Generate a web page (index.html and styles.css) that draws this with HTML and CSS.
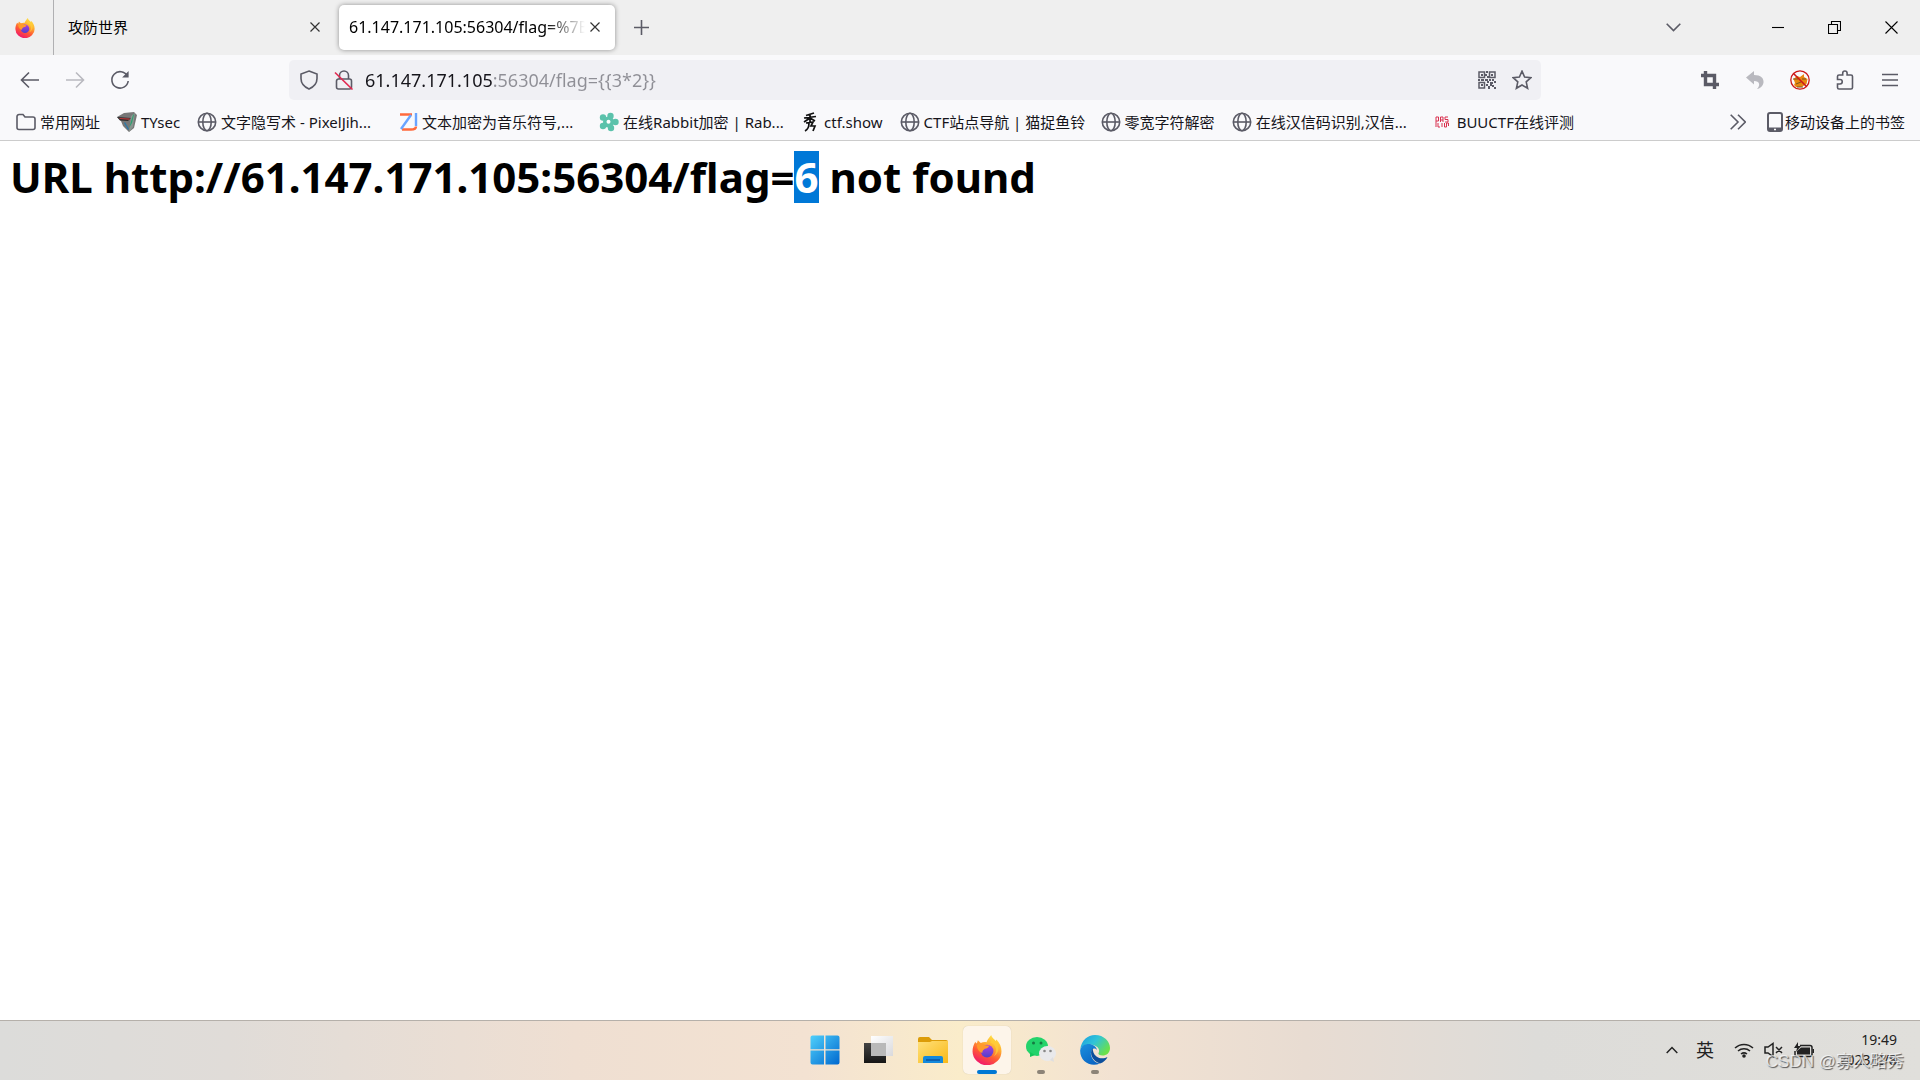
FILE: index.html
```html
<!DOCTYPE html>
<html lang="zh-CN">
<head>
<meta charset="utf-8">
<title>61.147.171.105:56304/flag={{3*2}}</title>
<link rel="stylesheet" href="styles.css">
</head>
<body>
<svg class="defs" aria-hidden="true">
  <defs>
    <linearGradient id="fx-body" x1="0.8" y1="0" x2="0.3" y2="1"><stop offset="0" stop-color="#ffe94a"/><stop offset=".35" stop-color="#ffb030"/><stop offset=".65" stop-color="#ff5a35"/><stop offset="1" stop-color="#f0136f"/></linearGradient>
    <linearGradient id="fx-core" x1="0" y1="0" x2="0" y2="1"><stop offset="0" stop-color="#b040e0"/><stop offset="1" stop-color="#5040c8"/></linearGradient>
    <linearGradient id="win" x1="0" y1="0" x2="1" y2="1"><stop offset="0" stop-color="#4fd0fb"/><stop offset="1" stop-color="#0068cf"/></linearGradient>
    <linearGradient id="dark" x1="0" y1="0" x2="0" y2="1"><stop offset="0" stop-color="#444"/><stop offset="1" stop-color="#161616"/></linearGradient>
    <linearGradient id="light" x1="0" y1="0" x2="1" y2="1"><stop offset="0" stop-color="#fff"/><stop offset="1" stop-color="#d9d9dc"/></linearGradient>
    <linearGradient id="folder" x1="0" y1="0" x2="1" y2="1"><stop offset="0" stop-color="#ffe07a"/><stop offset="1" stop-color="#f9b916"/></linearGradient>
    <linearGradient id="edge-top" x1="0" y1="0" x2="1" y2="0.6"><stop offset="0" stop-color="#1a9be0"/><stop offset=".5" stop-color="#30c4d8"/><stop offset="1" stop-color="#6be04a"/></linearGradient>
    <linearGradient id="edge-low" x1="0" y1="0" x2="0.6" y2="1"><stop offset="0" stop-color="#1b90de"/><stop offset="1" stop-color="#0a66c4"/></linearGradient>
    <symbol id="firefox" viewBox="0 0 28 28">
      <path d="M3 6.500 4.500 8 5.500 5l2.700 2.400c1.600-.9 3.900-1 5.300-.7C14.500 4 17 1 18 0c.2 2.700 3 3.600 4 5.500l.8-1.200C26 7.500 27.500 11.500 27.500 15A13.500 13 0 0 1 .5 15.500C.5 12 1.600 8.500 3 6.500z" fill="url(#fx-body)"/>
      <circle cx="14" cy="15" r="6" fill="url(#fx-core)"/>
      <path d="M4.500 9c3-1.500 6-1 7.500.5l4 .5c-.5 2-2.500 2.500-4 2.800-1 .8-2.500 1.700-2.300 3.700C6 16 4.500 12 4.500 9z" fill="#ff9a2a"/>
      <path d="M17 7c6 1.500 7 9 3 13 3.500-1.500 6-6 4-12-1-2-4-3-5-5z" fill="#ffce38" opacity=".75"/>
    </symbol>
    <symbol id="globe" viewBox="0 0 20 20"><g fill="none" stroke="#5b5b66" stroke-width="1.600"><circle cx="10" cy="10" r="8.700"/><ellipse cx="10" cy="10" rx="4.200" ry="8.700"/><path d="M1.500 10h17"/></g></symbol>
  </defs>
</svg>

<header class="browser">
  <div class="tabstrip">
    <button class="view-button" aria-label="Firefox View"><svg width="20" height="20"><use href="#firefox"/></svg></button>
    <div class="tab"><span class="tab-title">攻防世界</span><button class="tab-close" aria-label="关闭标签页"><svg width="10" height="10" viewBox="0 0 10 10"><path d="M.5.5l9 9M9.500.5l-9 9"/></svg></button></div>
    <div class="tab tab-active"><span class="tab-title">61.147.171.105:56304/flag=%7B%7B3*2</span><button class="tab-close" aria-label="关闭标签页"><svg width="10" height="10" viewBox="0 0 10 10"><path d="M.5.5l9 9M9.500.5l-9 9"/></svg></button></div>
    <button class="new-tab" aria-label="新建标签页"><svg width="15" height="15" viewBox="0 0 15 15"><path d="M7.500 0v15M0 7.500h15"/></svg></button>
    <button class="list-tabs" aria-label="列出标签页"><svg width="15" height="9" viewBox="0 0 15 9"><path d="M.7.7l6.800 6.800L14.300.7"/></svg></button>
    <div class="window-controls">
      <button aria-label="最小化"><svg width="12" height="12" viewBox="0 0 12 12"><path d="M0 5.500h12"/></svg></button>
      <button aria-label="还原"><svg width="13" height="13" viewBox="0 0 13 13"><path d="M.5 3.500h9v9h-9zM3.500 3.500v-3h9v9h-3"/></svg></button>
      <button aria-label="关闭"><svg width="13" height="13" viewBox="0 0 13 13"><path d="M.5.5l12 12M12.500.5l-12 12"/></svg></button>
    </div>
  </div>

  <div class="navbar">
    <div class="nav-left">
      <button aria-label="后退"><svg width="20" height="20" viewBox="0 0 20 20"><path d="M19 10H2M9 2.500L1.500 10 9 17.500"/></svg></button>
      <button class="faded" aria-label="前进"><svg width="20" height="20" viewBox="0 0 20 20"><path d="M1 10h17M11 2.500l7.500 7.500-7.500 7.500"/></svg></button>
      <button aria-label="刷新"><svg width="20" height="20" viewBox="0 0 20 20"><path d="M17.300 6A8.200 8.200 0 1 0 18.200 11"/><path d="M18.600 1v6.500h-6.500z" fill="#5b5b66" stroke="none"/></svg></button>
    </div>
    <div class="urlbar">
      <svg width="20" height="20" viewBox="0 0 20 20"><path d="M10 1l8 3v4.500c0 5-3.500 8.500-8 10.500-4.500-2-8-5.500-8-10.500V4z"/></svg>
      <svg width="20" height="20" viewBox="0 0 20 20"><path d="M5.500 9V5.500a4.500 4.500 0 0 1 9 0V9M4.500 9h11a2 2 0 0 1 2 2v6a2 2 0 0 1-2 2h-11a2 2 0 0 1-2-2v-6a2 2 0 0 1 2-2z"/><path d="M1 2.500l17.500 17" stroke="#e22850"/></svg>
      <input class="url-input" type="text" aria-label="网址" value="61.147.171.105:56304/flag={{3*2}}">
      <svg width="20" height="20" viewBox="0 0 20 20"><path d="M2 2h5.500v5.500H2zM12.500 2H18v5.500h-5.500zM2 12.500h5.500V18H2z" stroke-width="1.500"/><path d="M4 4h2v2H4zM14 4h2v2h-2zM4 14h2v2H4zM9 1h2v2H9zM8 4h2v2H8zM10 6h2v2h-2zM1 9h2v2H1zM4 9h3v2H4zM8 9h3v2H8zM12 9h2v2h-2zM15 9h2v2h-2zM17 11h2v2h-2zM10 11h2v2h-2zM13 12h3v2h-3zM9 14h2v2H9zM11 16h2v3h-2zM15 15h2v2h-2zM17 17h2v2h-2zM13 14h2v2h-2z" fill="#5b5b66" stroke="none"/></svg>
      <svg width="20" height="20" viewBox="0 0 20 20"><path d="M10 1.200l2.600 5.800 6.300.7-4.700 4.200 1.400 6.400-5.600-3.300-5.600 3.300 1.400-6.400L1.100 7.700 7.400 7z"/></svg>
    </div>
    <div class="nav-right">
      <button aria-label="截图"><svg width="18" height="18" viewBox="0 0 18 18"><path d="M4.500 0v13.500H18M0 4.500h13.500V18" stroke-width="3.400"/></svg></button>
      <button class="faded" aria-label="撤销"><svg width="18" height="18" viewBox="0 0 18 18"><path d="M0 6.500L8 0v4c7 0 10 3.500 9.500 7.500-.3 3-3 6-6.500 6.500 3.500-3.500 3-8-3-8v3.500z" fill="#5b5b66" stroke="none"/></svg></button>
      <button aria-label="FoxyProxy"><svg width="20" height="20" viewBox="0 0 20 20"><path d="M3.500 9L7 6l3 1 4-3v3l3.500 2-1 5-5 3H6l-2-2 1-2z" fill="#e88710" stroke="none"/><path d="M3 9h5M6 14l5-2M12 9h4M7 17h6" stroke="#7a5520" stroke-width="1"/><circle cx="10" cy="10" r="9.200" stroke="#cc1717" stroke-width="1.300"/><path d="M3.500 3.500l13 13" stroke="#cc1717"/></svg></button>
      <button aria-label="扩展"><svg width="20" height="20" viewBox="0 0 20 20"><path d="M2.500 8V6.500A1.500 1.500 0 0 1 4 5h3.700V3.200a2.200 2.200 0 0 1 4.400 0V5H16a1.500 1.500 0 0 1 1.500 1.500V17.500a1.500 1.500 0 0 1-1.500 1.500H4a1.500 1.500 0 0 1-1.500-1.500v-3.500H5a2 2 0 0 0 0-4.500H2.500z"/></svg></button>
      <button aria-label="菜单"><svg width="16" height="14" viewBox="0 0 16 14"><path d="M0 1.500h16M0 7h16M0 12.500h16"/></svg></button>
    </div>
  </div>

  <nav class="bookmarks">
    <a href="#"><svg width="20" height="20" viewBox="0 0 20 20"><path d="M1 4.500a2 2 0 0 1 2-2h4l2 2.500h8a2 2 0 0 1 2 2v8.500a2 2 0 0 1-2 2H3a2 2 0 0 1-2-2z"/></svg>常用网址</a>
    <a href="#"><svg width="20" height="20" viewBox="0 0 20 20"><g stroke="none"><path d="M0 5l7-4 10-1 3 3-3 13-5 4-6-6-2-5z" fill="#777"/><path d="M0 5l14 1-3 3-8-.5z" fill="#2c2c2c"/><path d="M14 4l4-3-2 14-4 5z" fill="#8b9690"/><path d="M2 6l11 .500-1 1.200L3 7z" fill="#c03a3a"/><path d="M16 3l1.200-1-2.200 9-3 5z" fill="#2fa070"/><path d="M8 10l4 7-1 1-4-7z" fill="#2d7aa8"/></g></svg>TYsec</a>
    <a class="long" href="#"><svg width="20" height="20"><use href="#globe"/></svg>文字隐写术 - PixelJih...</a>
    <a class="long" href="#"><svg width="20" height="20" viewBox="0 0 20 20"><path d="M2 2.500h12M4 17.500h9q5 0 5-3" stroke="#ff6a3c" stroke-width="2.400"/><path d="M13 3L3 17M18 1v13" stroke="#69a4ff" stroke-width="2.400"/></svg>文本加密为音乐符号,...</a>
    <a class="long" href="#"><svg width="20" height="20" viewBox="0 0 20 20"><g fill="#5bc2ab" stroke="none"><circle cx="11.500" cy="4" r="3.200"/><circle cx="16.500" cy="10" r="3.200"/><circle cx="12" cy="16" r="3.200"/><circle cx="4" cy="14" r="3.200"/><circle cx="4" cy="5.500" r="3.200"/><circle cx="9.500" cy="10" r="5.500"/></g><circle cx="9.500" cy="9.800" r="2" fill="#fff" stroke="none"/></svg>在线Rabbit加密 | Rab...</a>
    <a href="#"><svg width="20" height="20" viewBox="0 0 20 20"><path d="M14 1L6 3.500M4 6l12-1.500M10 2v8M10 6L4 10M10 6l5 3M6 11l7-1-2 4 4 0-2 5M9 11q0 6-4 8" stroke="#111" stroke-width="1.700"/></svg>ctf.show</a>
    <a class="long" href="#"><svg width="20" height="20"><use href="#globe"/></svg>CTF站点导航 | 猫捉鱼铃</a>
    <a href="#"><svg width="20" height="20"><use href="#globe"/></svg>零宽字符解密</a>
    <a class="long" href="#"><svg width="20" height="20"><use href="#globe"/></svg>在线汉信码识别,汉信...</a>
    <a href="#"><svg width="20" height="20" viewBox="0 0 20 20"><path d="M3 15V5h2.500v4H3M7.500 10V5H10v5M7.500 8H10M15 5h-3v2.500h3V10h-3M5 11v4h2M9 11v4M11.500 11v4h2v-4h2v3" stroke="#d9304e" stroke-width="1"/></svg>BUUCTF在线评测</a>
    <button class="overflow" aria-label="更多书签"><svg width="16" height="16" viewBox="0 0 16 16"><path d="M.7.7L8 8 .7 15.300M8 .7L15.300 8 8 15.300"/></svg></button>
    <a class="mobile" href="#"><svg width="16" height="20" viewBox="0 0 16 20"><path d="M3 1h10a2 2 0 0 1 2 2v14a2 2 0 0 1-2 2H3a2 2 0 0 1-2-2V3a2 2 0 0 1 2-2z" stroke-width="2"/><path d="M1 15.500h14V19H1z" fill="#5b5b66" stroke="none"/><path d="M7 17.500h2" stroke="#fff"/></svg>移动设备上的书签</a>
  </nav>
</header>

<main class="page">
  <h1>URL http://61.147.171.105:56304/flag=<mark>6</mark> not found</h1>
</main>

<footer class="taskbar">
  <div class="apps">
    <button aria-label="开始"><svg width="30" height="30" viewBox="0 0 30 30"><path d="M.5 2.500a2 2 0 0 1 2-2H14v13.700H.5zM15.500.5H27.500a2 2 0 0 1 2 2v11.700h-14zM.5 15.500H14v14H2.500a2 2 0 0 1-2-2zM15.500 15.500h14v12a2 2 0 0 1-2 2h-12z" fill="url(#win)"/></svg></button>
    <button aria-label="任务视图"><svg width="30" height="30" viewBox="0 0 30 30"><path d="M0 8h22v20H0z" fill="url(#dark)"/><path d="M7 1h22v20H7z" fill="url(#light)"/><path d="M7 8h15v13H7z" fill="#b9b9b9"/></svg></button>
    <button aria-label="文件资源管理器"><svg width="30" height="30" viewBox="0 0 30 30"><path d="M0 4a2 2 0 0 1 2-2h9l3 3h14a2 2 0 0 1 2 2v5H0z" fill="#dc9c08"/><path d="M0 7h12l2-1h16v22H0z" fill="url(#folder)"/><path d="M5 28v-5a2 2 0 0 1 2-2h16a2 2 0 0 1 2 2v5z" fill="#1489dc"/><path d="M8 25h14" stroke="#0b55a2" stroke-width="1.500"/></svg></button>
    <button class="current" aria-label="Firefox"><svg width="30" height="30"><use href="#firefox"/></svg></button>
    <button class="running" aria-label="微信"><svg width="30" height="30" viewBox="0 0 30 30"><ellipse cx="11" cy="11.500" rx="11" ry="9.500" fill="#23d36b"/><path d="M4 17l0 5 5-2z" fill="#15c65b"/><ellipse cx="21.500" cy="18.500" rx="8.500" ry="7.500" fill="#e9e9eb"/><path d="M24 25l4 2-1-5z" fill="#dedee0"/><g fill="#157a42"><circle cx="7.500" cy="8" r="1.500"/><circle cx="15" cy="8" r="1.500"/></g><g fill="#888"><circle cx="18.500" cy="16" r="1.300"/><circle cx="24.500" cy="16" r="1.300"/></g></svg></button>
    <button class="running" aria-label="Edge"><svg width="30" height="30" viewBox="0 0 30 30"><path d="M.3 14C1.500 5.500 7.500 0 15 0c9 0 15 6.500 15 13 0 5-3.500 7.500-7.500 7.500-3 0-4.500-1.200-4-2.500 1.500-2 .5-6-4-7.500C9 8.500 3 10 .3 14z" fill="url(#edge-top)"/><path d="M.2 15C1.500 10 7 8 11.500 9.500c3.500 1 5.500 3.500 5.300 5.500C14 11.500 10 15 11 20c1 5 5 8 9 8.500C10 32.500-.5 26 .2 15z" fill="url(#edge-low)"/><path d="M12.500 13C9 18 12 26 20 28.500c3.500-1 6.500-4 7.500-6.500-3 1.800-8 2-11-.5-3-2.300-3.500-5-4-8.500z" fill="#0c4f9c"/></svg></button>
  </div>
  <div class="tray">
    <svg width="12" height="8" viewBox="0 0 12 8"><path d="M.7 7L6 1.500 11.300 7"/></svg>
    <span class="ime">英</span>
    <div class="status">
      <svg width="20" height="16" viewBox="0 0 20 16"><path d="M1 6a13 13 0 0 1 18 0M4 9a9 9 0 0 1 12 0M7 12a5 5 0 0 1 6 0"/><circle cx="10" cy="14" r="1.800" fill="#222" stroke="none"/></svg>
      <svg width="20" height="16" viewBox="0 0 20 16"><path d="M1 5h3l5-3.500v13L4 11H1zM12 5l6 6M18 5l-6 6"/></svg>
      <svg width="20" height="16" viewBox="0 0 20 16"><path d="M6 3.500h10a2 2 0 0 1 2 2v7a2 2 0 0 1-2 2H3a2 2 0 0 1-2-2V9"/><path d="M7 5.500h9v7H3V9z" fill="#222" stroke="none"/><path d="M19.300 7v4"/><path d="M4 0L0 6h3L2 10l5-6H4z" fill="#222" stroke="none"/></svg>
    </div>
    <div class="clock"><span>19:49</span><span>2023/2/8</span></div>
  </div>
  <span class="watermark">CSDN @寡人略秀</span>
</footer>
</body>
</html>
```
FILE: styles.css
```css
* { box-sizing: border-box; }

body {
  margin: 0;
  min-height: 100vh;
  display: flex;
  flex-direction: column;
  background: #fff;
  color: #15141a;
  font: 15px/20px "Noto Sans", "Noto Sans CJK SC", sans-serif;
}

button {
  display: flex;
  align-items: center;
  justify-content: center;
  padding: 0;
  border: 0;
  background: none;
  font: inherit;
}

a { color: inherit; text-decoration: none; }

svg { flex: none; fill: none; stroke: #5b5b66; stroke-width: 1.6; }
.defs { position: absolute; width: 0; height: 0; }

/* tab strip */
.tabstrip { display: flex; height: 55px; background: #efefef; }
.view-button { width: 54px; padding-right: 4px; border-right: 1px solid #b0b0b2; }
.view-button svg, .apps svg { stroke: none; }

.tab {
  display: flex;
  align-items: center;
  width: 276px;
  margin: 5px 9px 5px 0;
  padding: 0 5px 2px 14px;
  border-radius: 5px;
  color: #000;
}
.tab-active { padding: 0 10px 1px; background: #fff; box-shadow: 0 0 5px #00000066; font-size: 16px; }
.tab-title { flex: 1; overflow: hidden; white-space: nowrap; }
.tab-active .tab-title { -webkit-mask-image: linear-gradient(to left, transparent, #000 40px); mask-image: linear-gradient(to left, transparent, #000 40px); }
.tab-close { width: 20px; height: 24px; }
.tab-close svg { stroke: #333; stroke-width: 1.2; }
.new-tab { width: 35px; }
.list-tabs { width: 40px; margin-left: auto; }
.window-controls { display: flex; margin-left: 56px; }
.window-controls button { width: 57px; }
.window-controls svg { stroke: #000; stroke-width: 1.1; }

/* navigation bar */
.navbar { display: flex; align-items: center; height: 50px; background: #f9f9fb; }
.nav-left { display: flex; width: 289px; padding-left: 7px; }
.nav-left button, .nav-right button { width: 45px; height: 40px; }
.faded { opacity: .4; }
.urlbar {
  flex: 1;
  display: flex;
  align-items: center;
  gap: 15px;
  height: 40px;
  padding: 0 9px 0 10px;
  border-radius: 5px;
  background: #f0f0f4;
}
.url-input {
  flex: 1;
  min-width: 0;
  margin-left: -4px;
  padding: 0;
  border: 0;
  outline: 0;
  font: 18px/24px "Noto Sans", sans-serif;
  color: transparent;
  background: linear-gradient(to right, #15141a 127px, #8f8f96 127px);
  -webkit-background-clip: text;
  background-clip: text;
}
.nav-right { display: flex; justify-content: flex-end; width: 379px; padding-right: 8px; }

/* bookmarks */
.bookmarks {
  display: flex;
  align-items: center;
  gap: 17px;
  height: 36px;
  padding: 0 15px 2px 16px;
  border-bottom: 1px solid #ccc;
  background: #f9f9fb;
}
.bookmarks a { display: flex; align-items: center; gap: 4px; white-space: nowrap; font-size: 15px; }
.bookmarks .long { width: 184px; }
.overflow { margin-left: auto; }
.bookmarks .mobile { gap: 2px; margin-left: 4px; }

/* page */
.page { flex: 1; padding: 10px; }
h1 { margin: 0; color: #000; font: bold 42px/52px "Noto Sans", sans-serif; }
mark { display: inline-block; background: #0078d7; color: #fff; }

/* taskbar */
.taskbar {
  position: relative;
  display: grid;
  grid-template-columns: 1fr auto 1fr;
  align-items: center;
  height: 60px;
  padding-bottom: 2px;
  border-top: 1px solid #b5b0aa;
  background: linear-gradient(to right, #dcdcda, #e0dcd8 12%, #efdfd2 30%, #f3e2d2 42%, #faecca 50%, #f2e2d2 58%, #e8dcd2 68%, #dddcd9 80%, #e0dfdb);
}
.apps { grid-column: 2; display: flex; gap: 6px; }
.apps button { position: relative; width: 48px; height: 48px; border-radius: 5px; }
.apps .current { background: #fdf5ea; box-shadow: 0 0 1px #0003; }
.current::after, .running::after {
  content: "";
  position: absolute;
  bottom: 0;
  width: 8px;
  height: 4px;
  border-radius: 2px;
  background: #8c8377;
}
.current::after { width: 20px; background: #0078d4; }

.tray { display: flex; align-items: center; justify-content: flex-end; padding-right: 23px; color: #222; }
.tray svg { stroke: #222; stroke-width: 1.5; }
.ime { margin: 0 20px 0 18px; font-size: 18px; }
.status { display: flex; gap: 10px; }
.clock { display: flex; flex-direction: column; align-items: flex-end; width: 83px; font-size: 14px; }
.watermark {
  position: absolute;
  right: 16px;
  bottom: 6px;
  color: #ffffffb3;
  font: 17px/24px "Liberation Sans", "Noto Sans CJK SC", sans-serif;
  text-shadow: 1px 1px 1px #555;
}
```
